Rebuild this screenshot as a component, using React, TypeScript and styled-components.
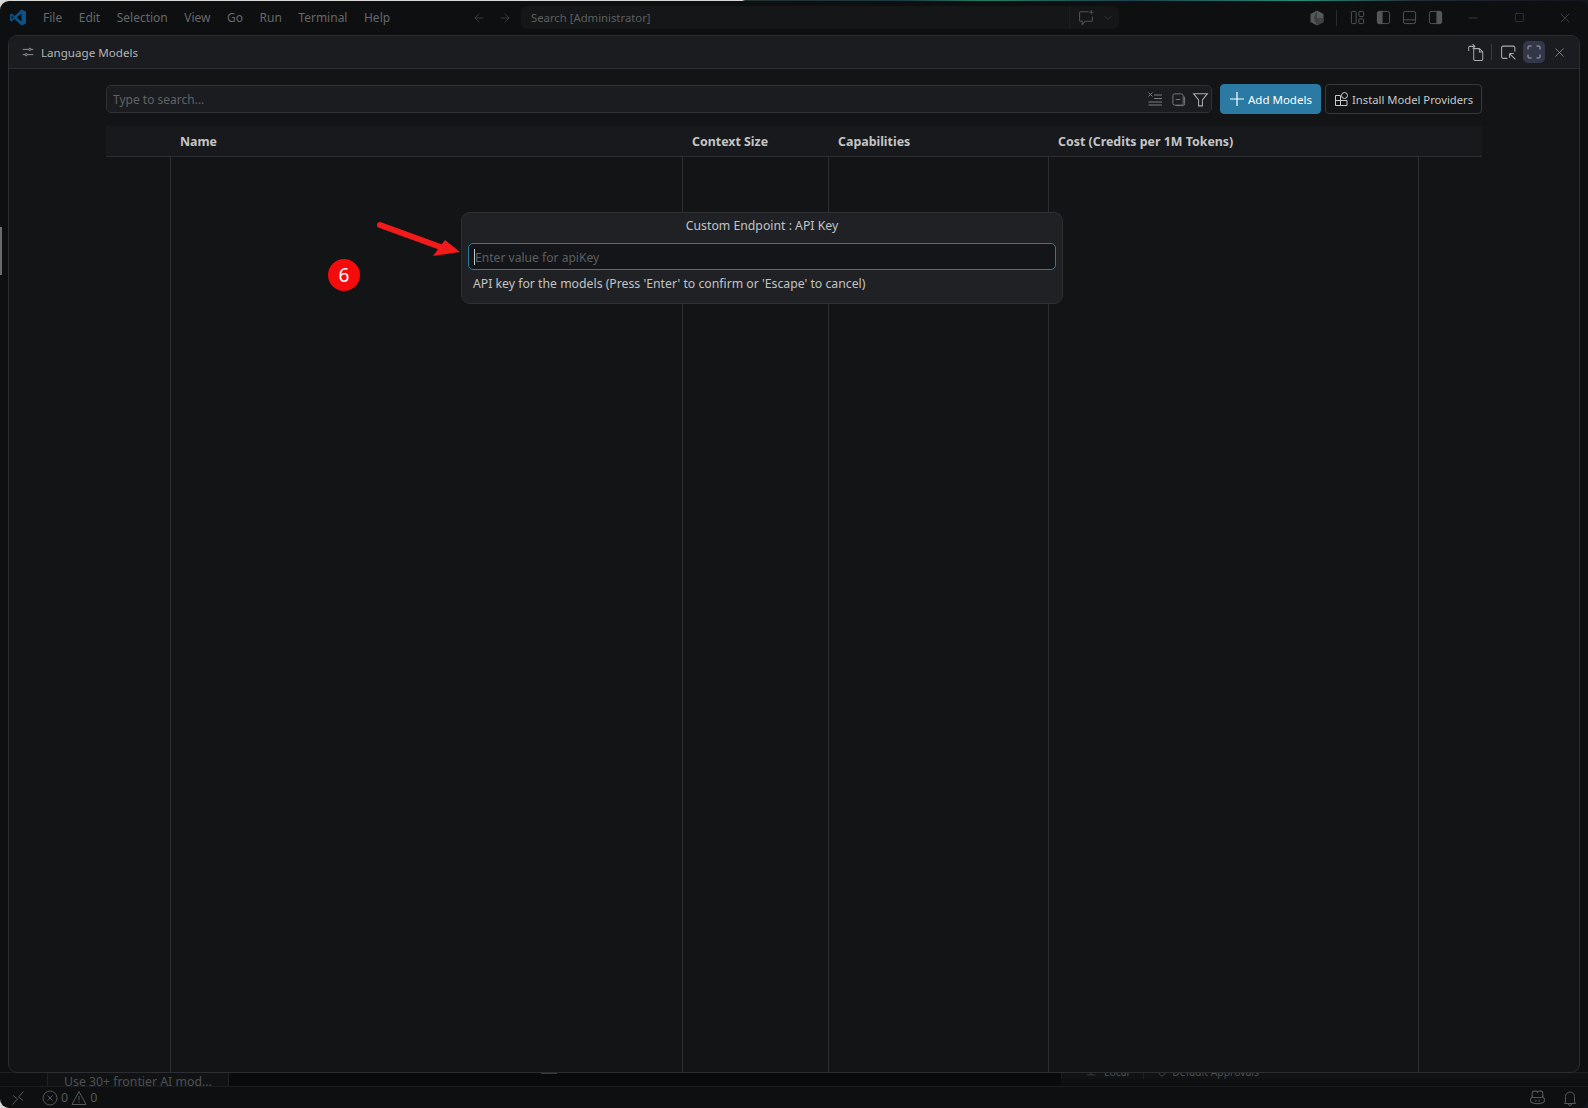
import styled, { createGlobalStyle } from 'styled-components';
import { ArrowLeft, ArrowRight, ChevronDown, Minus, Square, X } from 'lucide-react';
import type { ReactNode } from 'react';

const GlobalStyle = createGlobalStyle`
  html, body {
    margin: 0;
    padding: 0;
    width: 1588px;
    height: 1108px;
    overflow: hidden;
    background: #e4e4e4;
    font-family: 'Noto Sans', 'Liberation Sans', sans-serif;
  }
`;

const COLUMNS = '64px 512px 146px 220px 370px 64px';

const Desktop = styled.div`
  width: 1588px;
  height: 1108px;
  padding-top: 1px;
  box-sizing: border-box;
  background: linear-gradient(
    90deg,
    #d9d9d9 0 742px,
    #24302f 745px,
    #1c3a46 900px,
    #1f7f68 985px,
    #1d4050 1130px,
    #20917a 1300px,
    #252a3a 1420px,
    #13151c 1588px
  );
`;

const Window = styled.div`
  position: relative;
  height: 100%;
  display: flex;
  flex-direction: column;
  background: #0d0f10;
  border-radius: 9px;
  overflow: hidden;
`;

const TitleBar = styled.header`
  height: 33px;
  flex: none;
  display: flex;
  align-items: center;
  color: #66696b;
  font-size: 12px;
`;

const Logo = styled.div`
  width: 43px;
  flex: none;
  display: flex;
  padding-left: 10px;
  box-sizing: border-box;
`;

const Menu = styled.nav`
  display: flex;
  gap: 16.5px;
  width: 429px;
  flex: none;
`;

const NavArrows = styled.div`
  display: flex;
  gap: 12px;
  width: 49px;
  flex: none;
  color: #55585a;
`;

const CommandCenter = styled.div`
  width: 598px;
  height: 23px;
  flex: none;
  display: flex;
  align-items: center;
  padding-left: 10px;
  box-sizing: border-box;
  background: #141617;
  border-radius: 6px;
  color: #5c5f61;
`;

const CommandText = styled.span`
  flex: 1;
  font-size: 11.3px;
`;

const ChatBox = styled.div`
  height: 100%;
  width: 50px;
  display: flex;
  align-items: center;
  gap: 7px;
  padding-left: 8px;
  box-sizing: border-box;
  border-left: 1px solid #1b1d1f;
  color: #4f5254;
`;

const LayoutArea = styled.div`
  margin-left: 190px;
  width: 139px;
  flex: none;
  display: flex;
  align-items: center;
  color: #55585a;
`;

const LayoutDivider = styled.span`
  width: 1px;
  height: 16px;
  background: #2a2c2e;
  margin: 0 13px 0 11px;
`;

const LayoutIcons = styled.div`
  display: flex;
  gap: 11px;
`;

const WindowControls = styled.div`
  display: flex;
  flex: none;
  margin-left: 2px;
  color: #55585a;
`;

const WindowButton = styled.div`
  width: 46px;
  height: 33px;
  display: flex;
  align-items: center;
  justify-content: center;
`;

const Workbench = styled.main`
  flex: 1;
  position: relative;
  display: flex;
  flex-direction: column;
  justify-content: flex-end;
`;

const BackStrip = styled.div`
  height: 14px;
  flex: none;
  display: flex;
  overflow: hidden;
  color: #4e5153;
  border-top: 1px solid #1d1f21;
  box-sizing: border-box;
`;

const BackTab = styled.div`
  width: 182px;
  margin-left: 47px;
  padding-left: 16px;
  box-sizing: border-box;
  flex: none;
  border-left: 1px solid #202224;
  border-right: 1px solid #202224;
  font-size: 12.3px;
  line-height: 17px;
  white-space: nowrap;
  background: #101213;
`;

const BackGap = styled.div`
  width: 832px;
  flex: none;
  background: #090a0b;
  position: relative;
`;

const SashHandle = styled.span`
  position: absolute;
  left: 312px;
  top: 0;
  width: 16px;
  height: 1px;
  background: #3a3c3e;
`;

const BackApprovals = styled.div`
  flex: 1;
  display: flex;
  align-items: center;
  height: 13px;
  margin-top: -7px;
  border-left: 1px solid #1b1d1f;
  background: #101213;
  padding-left: 24px;
  font-size: 10.4px;
  line-height: 13px;
  white-space: nowrap;
`;

const BackItem = styled.span<{ $gap: number }>`
  display: flex;
  align-items: center;
  gap: ${({ $gap }) => $gap}px;
`;

const BackDivider = styled.span`
  width: 1px;
  height: 13px;
  margin: 0 14px;
  background: #1f2123;
`;

const StatusBar = styled.footer`
  height: 22px;
  flex: none;
  display: flex;
  align-items: center;
  justify-content: space-between;
  padding: 0 10px;
  border-top: 1px solid #1a1c1e;
  box-sizing: border-box;
  color: #55585a;
  font-size: 12.5px;
`;

const StatusGroup = styled.div<{ $gap: number }>`
  display: flex;
  align-items: center;
  gap: ${({ $gap }) => $gap}px;
`;

const ProblemCount = styled.span`
  display: flex;
  align-items: center;
  gap: 3px;
  margin-left: 2px;
`;

const Panel = styled.section`
  position: absolute;
  left: 8px;
  right: 8px;
  top: 1px;
  bottom: 35px;
  display: flex;
  flex-direction: column;
  background: #121416;
  border: 1px solid #2c2e31;
  border-radius: 9px;
  overflow: hidden;
`;

const PanelHeader = styled.div`
  height: 32px;
  flex: none;
  display: flex;
  align-items: center;
  justify-content: space-between;
  padding: 0 9px 0 13px;
  background: #1a1c1f;
  border-bottom: 1px solid #2c2e31;
  color: #b4b5b7;
  font-size: 11.6px;
`;

const PanelTitle = styled.div`
  display: flex;
  align-items: center;
  gap: 7px;
`;

const PanelActions = styled.div`
  display: flex;
  align-items: center;
  color: #a9abad;
`;

const ActionDivider = styled.span`
  width: 1px;
  height: 16px;
  background: #3a3c3f;
  margin: 0 5px 0 4px;
`;

const ActionButton = styled.div<{ $active?: boolean; $gap?: number }>`
  width: 22px;
  height: 22px;
  display: flex;
  align-items: center;
  justify-content: center;
  border-radius: 5px;
  margin-left: ${({ $gap }) => $gap ?? 0}px;
  background: ${({ $active }) => ($active ? '#34374a' : 'transparent')};
`;

const Content = styled.div`
  flex: 1;
  display: flex;
  flex-direction: column;
  min-height: 0;
  padding: 15px 97px 0;
`;

const SearchRow = styled.div`
  display: flex;
  align-items: center;
  height: 30px;
  flex: none;
`;

const SearchBox = styled.div`
  width: 1106px;
  height: 28px;
  flex: none;
  display: flex;
  align-items: center;
  padding: 0 0 0 6px;
  box-sizing: border-box;
  background: #1a1c1f;
  border: 1px solid #303235;
  border-radius: 5px;
  margin-right: 8px;
`;

const SearchInput = styled.input`
  flex: 1;
  min-width: 0;
  background: none;
  border: none;
  outline: none;
  padding: 0;
  font: inherit;
  font-size: 12px;
  color: #ccc;

  &::placeholder {
    color: #606265;
    opacity: 1;
  }
`;

const SearchIcons = styled.div`
  display: flex;
  align-items: center;
  gap: 6px;
  color: #7a7c7e;

  svg:first-child {
    margin-right: 2px;
  }
`;

const FilterIcon = styled.span`
  display: flex;
  color: #a9abad;
`;

const Button = styled.button<{ $primary?: boolean }>`
  height: 30px;
  display: flex;
  align-items: center;
  gap: ${({ $primary }) => ($primary ? '3px' : '2px')};
  padding: 0 8px;
  box-sizing: border-box;
  border-radius: 4px;
  font: inherit;
  font-size: ${({ $primary }) => ($primary ? '11.5px' : '11.25px')};
  white-space: nowrap;
  color: ${({ $primary }) => ($primary ? '#ffffff' : '#c8c9ca')};
  background: ${({ $primary }) => ($primary ? '#2a7aa3' : '#121416')};
  border: 1px solid ${({ $primary }) => ($primary ? '#2a7aa3' : '#38393c')};
  margin-left: ${({ $primary }) => ($primary ? '0' : '4px')};
  width: ${({ $primary }) => ($primary ? '101px' : '157px')};

  svg {
    flex: none;
  }
`;

const Table = styled.div`
  flex: 1;
  display: flex;
  flex-direction: column;
  margin-top: 12px;
  min-height: 0;
`;

const TableHead = styled.div`
  height: 30px;
  flex: none;
  display: grid;
  grid-template-columns: ${COLUMNS};
  align-items: center;
  background: #17191c;
  border-bottom: 1px solid #2c2e31;
  color: #c4c5c7;
  font-size: 12.4px;
  font-weight: 700;
`;

const HeadCell = styled.div`
  padding-left: 10px;
`;

const TableBody = styled.div`
  flex: 1;
  display: grid;
  grid-template-columns: ${COLUMNS};
`;

const Column = styled.div<{ $first?: boolean }>`
  border-left: ${({ $first }) => ($first ? 'none' : '1px solid #2c2e31')};
`;

const QuickInput = styled.div`
  position: absolute;
  left: 461px;
  top: 211px;
  width: 602px;
  height: 92px;
  box-sizing: border-box;
  display: flex;
  flex-direction: column;
  padding: 0 6px;
  background: #1f2124;
  border: 1px solid #2e3033;
  border-radius: 9px;
  color: #c2c3c5;
  font-size: 12.25px;
`;

const QuickTitle = styled.div`
  height: 30px;
  flex: none;
  padding-bottom: 5px;
  box-sizing: border-box;
  display: flex;
  align-items: center;
  justify-content: center;
`;

const QuickField = styled.div`
  height: 27px;
  flex: none;
  display: flex;
  align-items: center;
  padding-left: 5px;
  box-sizing: border-box;
  background: #131518;
  border: 1px solid #2f7a96;
  border-radius: 5px;
`;

const Caret = styled.span`
  width: 1px;
  height: 16px;
  flex: none;
  background: #c8c8c8;
`;

const QuickValue = styled.input`
  flex: 1;
  min-width: 0;
  background: none;
  border: none;
  outline: none;
  padding: 1px 0 0;
  font: inherit;
  font-size: 12.1px;
  color: #ccc;

  &::placeholder {
    color: #5d5f62;
    opacity: 1;
  }
`;

const QuickMessage = styled.div`
  padding: 5px 0 0 5px;
`;

const StepBadge = styled.div`
  position: absolute;
  left: 328px;
  top: 258px;
  width: 32px;
  height: 32px;
  border-radius: 50%;
  display: flex;
  align-items: center;
  justify-content: center;
  background: #f50b0b;
  color: #ffffff;
  font-size: 19px;
`;

const CalloutArrow = styled.svg`
  position: absolute;
  left: 370px;
  top: 215px;
`;

const SideGrip = styled.div`
  position: absolute;
  left: 0;
  top: 226px;
  width: 2px;
  height: 48px;
  background: #6b6c6d;
`;

function Glyph({ size = 16, stroke = 1, children }: { size?: number; stroke?: number; children: ReactNode }) {
  return (
    <svg width={size} height={size} viewBox='0 0 16 16' fill='none' stroke='currentColor' strokeWidth={stroke}>
      {children}
    </svg>
  );
}

const menuItems = ['File', 'Edit', 'Selection', 'View', 'Go', 'Run', 'Terminal', 'Help'];

export default function App() {
  return (
    <Desktop>
      <GlobalStyle />
      <Window>
        <TitleBar>
          <Logo>
            <svg width='16' height='17' viewBox='0 0 16 17'>
              <path d='M11.5 0.5 16 2.6v11.8l-4.5 2.1L4.6 10.1 1.6 12.4 0 11.6V5.4l1.6-.8 3 2.3z' fill='#0c5288' />
              <path d='M11.5 4.6 6.8 8.5l4.7 3.9z' fill='#0d0f10' />
              <path d='M1.6 6.4v4.2l2-2.1z' fill='#0d0f10' />
            </svg>
          </Logo>
          <Menu>
            {menuItems.map((item) => (
              <span key={item}>{item}</span>
            ))}
          </Menu>
          <NavArrows>
            <ArrowLeft size={14} strokeWidth={1} />
            <ArrowRight size={14} strokeWidth={1} />
          </NavArrows>
          <CommandCenter>
            <CommandText>Search [Administrator]</CommandText>
            <ChatBox>
              <Glyph size={17}>
                <path d='M10 2.5H2.5a1 1 0 0 0-1 1v7a1 1 0 0 0 1 1H4v3l3-3h5.5a1 1 0 0 0 1-1V7' />
                <path d='M12.5 1v4M10.5 3h4' />
              </Glyph>
              <ChevronDown size={12} strokeWidth={1} />
            </ChatBox>
          </CommandCenter>
          <LayoutArea>
            <svg width='16' height='16' viewBox='0 0 16 16'>
              <path d='M8 0.5 14.5 4v8L8 15.5 1.5 12V4z' fill='#55585a' />
              <path d='M8 0.5 5 8l3 7.5z' fill='#3a3c3e' />
              <path d='M8 8h6.5V12L8 15.5z' fill='#3f4143' />
            </svg>
            <LayoutDivider />
            <LayoutIcons>
              <Glyph size={15}>
                <rect x='1.5' y='1.5' width='5' height='13' rx='1' />
                <rect x='9.5' y='1.5' width='5' height='5.5' rx='1' />
                <rect x='9.5' y='9.5' width='5' height='5' rx='1' />
              </Glyph>
              <Glyph size={15}>
                <rect x='1.5' y='1.5' width='13' height='13' rx='2' />
                <path d='M1.5 3.5a2 2 0 0 1 2-2h3v13h-3a2 2 0 0 1-2-2z' fill='currentColor' />
              </Glyph>
              <Glyph size={15}>
                <rect x='1.5' y='1.5' width='13' height='13' rx='2' />
                <path d='M1.5 10.5h13' />
              </Glyph>
              <Glyph size={15}>
                <rect x='1.5' y='1.5' width='13' height='13' rx='2' />
                <path d='M14.5 3.5a2 2 0 0 0-2-2h-3v13h3a2 2 0 0 0 2-2z' fill='currentColor' />
              </Glyph>
            </LayoutIcons>
          </LayoutArea>
          <WindowControls>
            <WindowButton>
              <Minus size={14} strokeWidth={1} />
            </WindowButton>
            <WindowButton>
              <Square size={11} strokeWidth={1} />
            </WindowButton>
            <WindowButton>
              <X size={16} strokeWidth={1} />
            </WindowButton>
          </WindowControls>
        </TitleBar>

        <Workbench>
          <BackStrip>
            <BackTab>Use 30+ frontier AI mod...</BackTab>
            <BackGap>
              <SashHandle />
            </BackGap>
            <BackApprovals>
              <BackItem $gap={8}>
                <Glyph size={10}>
                  <path d='M1 5h14M1 11h14M8 5v6' />
                </Glyph>
                Local
              </BackItem>
              <BackDivider />
              <BackItem $gap={6}>
                <Glyph size={8} stroke={1.5}>
                  <path d='M2 2h12v6c0 3-3 5-6 6-3-1-6-3-6-6z' />
                </Glyph>
                Default Approvals
              </BackItem>
            </BackApprovals>
          </BackStrip>
          <StatusBar>
            <StatusGroup $gap={14}>
              <Glyph size={16}>
                <path d='M2.5 14.5 7.5 9 3 5.5M13.5 1.5 8.5 7l4.5 3.5' />
              </Glyph>
              <ProblemCount>
                <Glyph size={16}>
                  <circle cx='8' cy='8' r='7' />
                  <path d='M5.5 5.5l5 5M10.5 5.5l-5 5' />
                </Glyph>
                0
                <Glyph size={16}>
                  <path d='M8 1.5 15 14.5H1z' />
                  <path d='M8 6v4.5M8 11.5v1.2' />
                </Glyph>
                0
              </ProblemCount>
            </StatusGroup>
            <StatusGroup $gap={16}>
              <Glyph size={17}>
                <path d='M4.5 2h2.2A1.5 1.5 0 0 1 8 3a1.5 1.5 0 0 1 1.3-1h2.2A1.7 1.7 0 0 1 13 3.7v2.8A1.5 1.5 0 0 1 11.5 8h-7A1.5 1.5 0 0 1 3 6.5V3.7A1.7 1.7 0 0 1 4.5 2z' />
                <path d='M3 6v2L1.5 9v2.5C3 14.5 13 14.5 14.5 11.5V9L13 8V6M6.5 10v2M9.5 10v2' />
              </Glyph>
              <Glyph size={16}>
                <path d='M3.5 12V6.5a4.5 4.5 0 0 1 9 0V12l1 1.5h-11z' />
                <path d='M6.5 14a1.5 1.5 0 0 0 3 0' />
              </Glyph>
            </StatusGroup>
          </StatusBar>

          <Panel>
            <PanelHeader>
              <PanelTitle>
                <Glyph size={12}>
                  <path d='M1 4.5h8M12 4.5h3M1 11.5h3M7 11.5h8' />
                  <circle cx='10.5' cy='4.5' r='1.5' />
                  <circle cx='5.5' cy='11.5' r='1.5' />
                </Glyph>
                Language Models
              </PanelTitle>
              <PanelActions>
                <ActionButton>
                  <Glyph size={18} stroke={0.9}>
                    <path d='M6 5h5l3 3v6.5a1 1 0 0 1-1 1H7a1 1 0 0 1-1-1z' />
                    <path d='M11 5v3h3' />
                    <path d='M1.5 7V4a1 1 0 0 1 1-1H7M5 1l2 2-2 2' />
                  </Glyph>
                </ActionButton>
                <ActionDivider />
                <ActionButton>
                  <Glyph size={17}>
                    <path d='M7 13.5H3a1.5 1.5 0 0 1-1.5-1.5V3.5A1.5 1.5 0 0 1 3 2h9.5A1.5 1.5 0 0 1 14 3.5V7' />
                    <path d='M9 9h4M9 9v4M9 9l5.5 5.5' />
                  </Glyph>
                </ActionButton>
                <ActionButton $active $gap={4}>
                  <Glyph size={16}>
                    <path d='M2 5.5V3a1 1 0 0 1 1-1h2.5M10.5 2H13a1 1 0 0 1 1 1v2.5M14 10.5V13a1 1 0 0 1-1 1h-2.5M5.5 14H3a1 1 0 0 1-1-1v-2.5' />
                  </Glyph>
                </ActionButton>
                <ActionButton $gap={3}>
                  <X size={15} strokeWidth={1.1} />
                </ActionButton>
              </PanelActions>
            </PanelHeader>

            <Content>
              <SearchRow>
                <SearchBox>
                  <SearchInput placeholder='Type to search...' readOnly />
                  <SearchIcons>
                    <Glyph size={16}>
                      <path d='M7 4h8M7 7.5h8M1.5 11h13.5M1.5 14h13.5' />
                      <path d='M1.5 1.5l4 4M5.5 1.5l-4 4' />
                    </Glyph>
                    <Glyph size={15}>
                      <rect x='2' y='2' width='11' height='12' rx='2' />
                      <path d='M5 8h5M14.5 5v7.5a2 2 0 0 1-2 2H5' />
                    </Glyph>
                    <FilterIcon>
                      <Glyph size={17}>
                        <path d='M1.5 2.5h13L9.8 8.5v5.5H6.2V8.5z' />
                      </Glyph>
                    </FilterIcon>
                  </SearchIcons>
                </SearchBox>
                <Button $primary>
                  <Glyph size={16} stroke={1.2}>
                    <path d='M8 1v14M1 8h14' />
                  </Glyph>
                  Add Models
                </Button>
                <Button>
                  <Glyph size={16}>
                    <path d='M1.5 4.5h5v10h-5zM1.5 9.5h11.5v5H6.5V9' />
                    <circle cx='10.5' cy='4.5' r='3' />
                  </Glyph>
                  Install Model Providers
                </Button>
              </SearchRow>

              <Table>
                <TableHead>
                  <HeadCell />
                  <HeadCell>Name</HeadCell>
                  <HeadCell>Context Size</HeadCell>
                  <HeadCell>Capabilities</HeadCell>
                  <HeadCell>Cost (Credits per 1M Tokens)</HeadCell>
                  <HeadCell />
                </TableHead>
                <TableBody>
                  <Column $first />
                  <Column />
                  <Column />
                  <Column />
                  <Column />
                  <Column />
                </TableBody>
              </Table>
            </Content>
          </Panel>
        </Workbench>

        <SideGrip />

        <QuickInput>
          <QuickTitle>Custom Endpoint : API Key</QuickTitle>
          <QuickField>
            <Caret />
            <QuickValue placeholder='Enter value for apiKey' readOnly />
          </QuickField>
          <QuickMessage>API key for the models (Press 'Enter' to confirm or 'Escape' to cancel)</QuickMessage>
        </QuickInput>

        <StepBadge>6</StepBadge>

        <CalloutArrow width='95' height='45' viewBox='370 215 95 45'>
          <path d='M380 224 446 248' stroke='#f21a1a' strokeWidth='6' strokeLinecap='round' />
          <path d='M460 251 433 255 445 239z' fill='#f21a1a' />
        </CalloutArrow>
      </Window>
    </Desktop>
  );
}
